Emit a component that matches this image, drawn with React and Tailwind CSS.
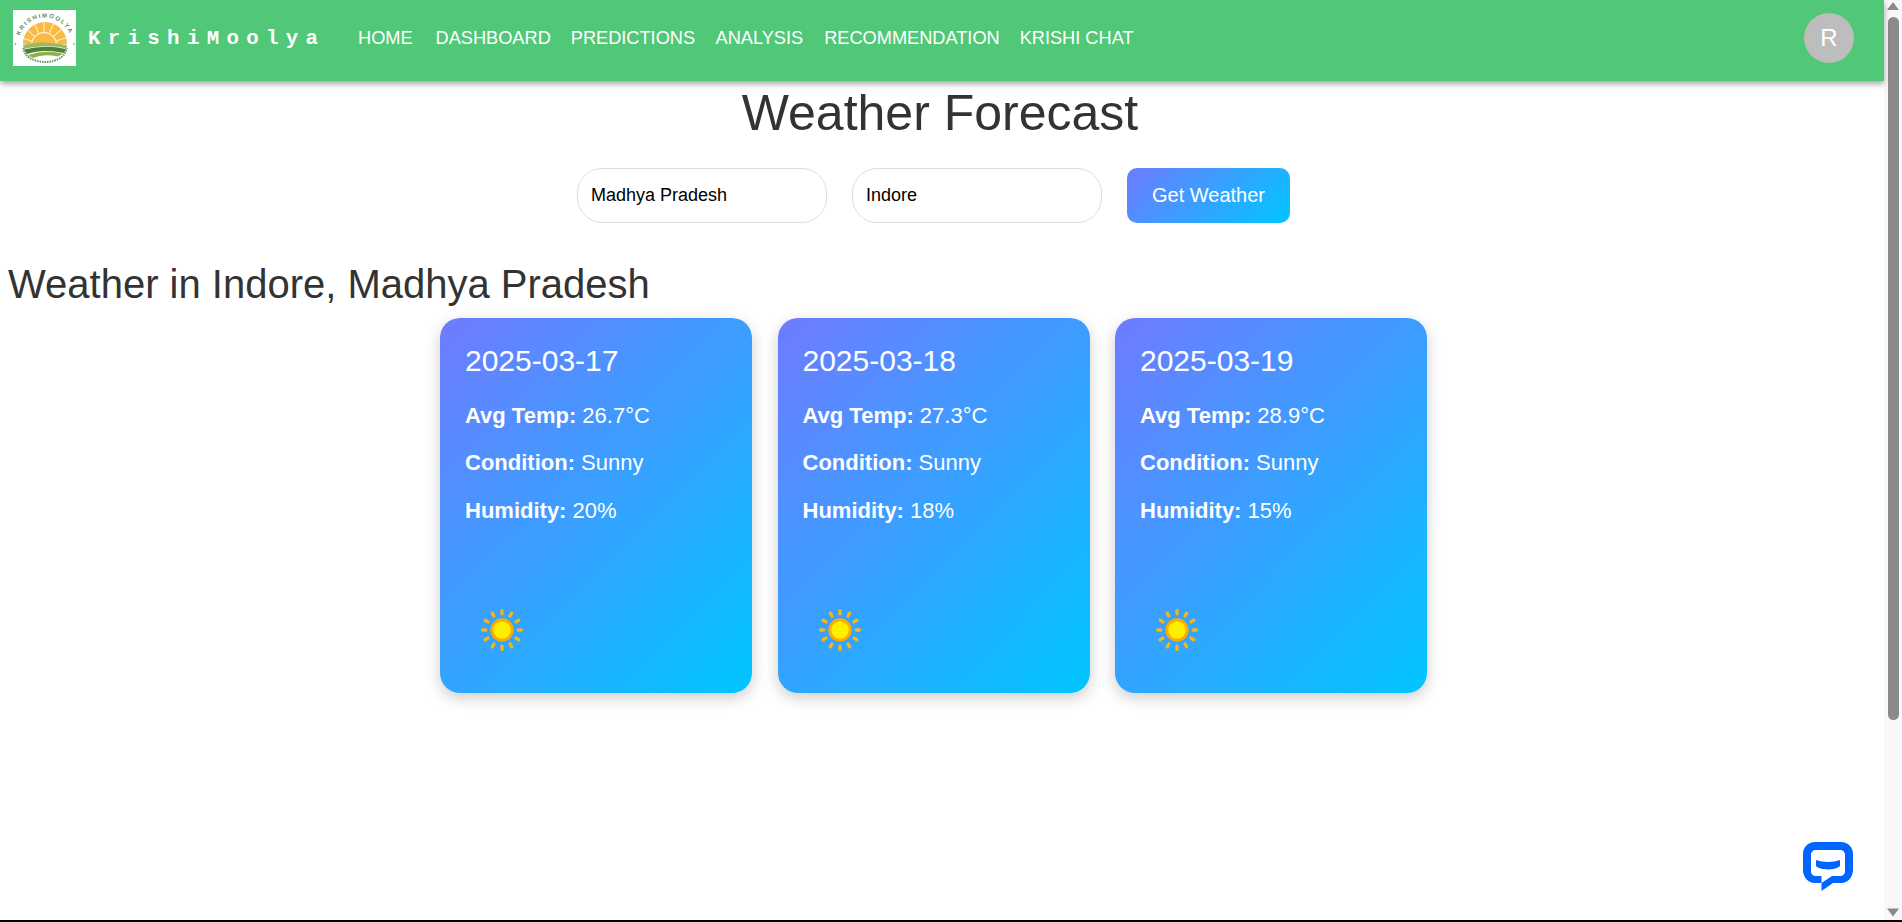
import React from "react";

const sans = "font-['Liberation_Sans',Arial,sans-serif]";

function Logo() {
  const rays = [-72, -48, -24, 0, 24, 48, 72];
  return (
    <svg viewBox="0 0 63 56" className="w-[63px] h-[56px] bg-white shrink-0">
      <defs>
        <path id="logoArc" d="M5.8 30 A26.5 26.5 0 0 1 58.2 30" fill="none" />
        <clipPath id="logoClip"><circle cx="32" cy="34" r="22" /></clipPath>
      </defs>
      <text fontSize="6" fontWeight="700" fill="#5f8a58" fontFamily="Liberation Sans" letterSpacing="1.6">
        <textPath href="#logoArc" startOffset="6%">KRISHIMOOLYA</textPath>
      </text>
      <circle cx="2.5" cy="34" r="0.8" fill="#5f8a58" />
      <circle cx="61" cy="34" r="0.8" fill="#5f8a58" />
      <g clipPath="url(#logoClip)">
        <rect x="9" y="10" width="46" height="25" fill="#fbb93f" />
        {rays.map((a) => (
          <line key={a} x1="31" y1="35" x2="31" y2="8" stroke="#fdf3d8" strokeWidth="1" transform={`rotate(${a} 31 35)`} />
        ))}
        <circle cx="31" cy="35" r="13" fill="#fdf3d8" />
        <circle cx="31" cy="35" r="11.8" fill="#fbb93f" />
        <rect x="9" y="34" width="46" height="22" fill="#ffffff" />
        <path d="M10 35 Q26 30 54 35 L54 38.5 Q32 34 10 39 Z" fill="#9dbb5c" />
        <path d="M11 39.5 Q32 34.5 53 39 L51 43 Q30 38.5 14 44 Z" fill="#4f7f3b" />
        <path d="M15 45 Q32 39.5 50 43.5 L45 46.5 Q30 43.5 20 48 Z" fill="#8db04a" />
      </g>
      <path d="M10.5 38 A21.5 14 0 0 0 53.5 38" fill="none" stroke="#6f9564" strokeWidth="2" strokeDasharray="1.6 0.9" />
    </svg>
  );
}

function Sun() {
  const rays = [0, 30, 60, 90, 120, 150, 180, 210, 240, 270, 300, 330];
  return (
    <svg viewBox="0 0 44 44" className="w-[44px] h-[44px] block">
      {rays.map((a) => (
        <line key={a} x1="22" y1="2.6" x2="22" y2="5.8" stroke="#ffb30f" strokeWidth="3.3" strokeLinecap="round" transform={`rotate(${a} 22 22)`} />
      ))}
      <circle cx="22" cy="22" r="11.7" fill="#ffa800" />
      <circle cx="22" cy="22" r="8.8" fill="#ffee00" />
    </svg>
  );
}

function Card({ date, temp, humidity }) {
  return (
    <div className="w-[312px] h-[375px] rounded-[20px] bg-[linear-gradient(135deg,#6f7bff,#00c6ff)] shadow-[0_5px_15px_rgba(0,0,0,0.2)] px-[25px] pt-[26px] text-white flex flex-col">
      <h3 className="text-[30px] leading-[34px] font-normal mb-[25px]">{date}</h3>
      <p className="text-[22px] leading-[25px] mb-[22.3px]"><strong className="font-bold">Avg Temp:</strong> {temp}°C</p>
      <p className="text-[22px] leading-[25px] mb-[22.3px]"><strong className="font-bold">Condition:</strong> Sunny</p>
      <p className="text-[22px] leading-[25px]"><strong className="font-bold">Humidity:</strong> {humidity}%</p>
      <div className="mt-[85px] ml-[15px]"><Sun /></div>
    </div>
  );
}

function Scrollbar() {
  return (
    <div className="w-[18px] shrink-0 bg-[#f8f8f8] flex flex-col items-center">
      <svg viewBox="0 0 12 8" className="w-[12px] h-[8px] mt-[2px] shrink-0"><path d="M6 0 L12 8 L0 8 Z" fill="#8a8a8a" /></svg>
      <div className="w-[11px] h-[703px] mt-[7px] rounded-t-[6px] rounded-b-[6px] bg-[#8a8a8a]" />
      <div className="flex-1" />
      <svg viewBox="0 0 12 8" className="w-[12px] h-[9px] mb-[3px] shrink-0"><path d="M0 0 L12 0 L6 8 Z" fill="#8a8a8a" /></svg>
    </div>
  );
}

function ChatIcon() {
  return (
    <svg viewBox="0 0 50 50" className="w-[50px] h-[50px]">
      <path fillRule="evenodd" fill="#0066ff" d="M12 0 H38 C45 0 50 5 50 12 V28 C50 35 45 41 38 41 H30 L18.5 49 V41 H12 C5 41 0 35 0 28 V12 C0 5 5 0 12 0 Z M13 8 C10 8 8 10 8 13 V29 C8 32 10 34 13 34 H18.5 V41 L29 34 H37 C40 34 42 32 42 29 V13 C42 10 40 8 37 8 Z" />
      <path fill="#0066ff" d="M13 18 C20 20.5 30 20.5 37 18 V24 C33 28.5 17 28.5 13 24 Z" />
    </svg>
  );
}

const links = [
  ["HOME", "mr-[23px]"],
  ["DASHBOARD", "mr-[20px]"],
  ["PREDICTIONS", "mr-[20.5px]"],
  ["ANALYSIS", "mr-[21px]"],
  ["RECOMMENDATION", "mr-[20px]"],
  ["KRISHI CHAT", ""],
];

export default function App() {
  return (
    <div className={`${sans} h-[922px] flex flex-col overflow-hidden bg-white`}>
      <div className="flex flex-1 min-h-0">
        <div className="flex-1 min-w-0 flex flex-col relative">
          <nav className="h-[81px] shrink-0 bg-[#50c878] shadow-[0_3px_6px_rgba(0,0,0,0.35)] flex items-center pl-[13px] pr-[30px] pb-[5px]">
            <Logo />
            <span className="ml-[12px] mt-[2px] w-[270px] text-white font-bold text-[20.8px] tracking-[7.3px] font-['Liberation_Mono',monospace]">KrishiMoolya</span>
            <ul className="flex items-center mt-[2px] text-white text-[18.2px]">
              {links.map(([l, m]) => (
                <li key={l} className={m}>{l}</li>
              ))}
            </ul>
            <div className="ml-auto w-[50px] h-[50px] rounded-full bg-[#bdbdbd] text-white text-[24px] flex items-center justify-center">R</div>
          </nav>
          <h1 className="text-center pr-[4px] text-[50px] leading-[59px] font-normal text-[#333] mt-[3px]">Weather Forecast</h1>
          <div className="flex justify-center pr-[17px] gap-[25px] mt-[25px]">
            <input readOnly value="Madhya Pradesh" className="w-[250px] h-[55px] rounded-[25px] border border-[#ddd] px-[13px] text-[18px] text-black outline-none" />
            <input readOnly value="Indore" className="w-[250px] h-[55px] rounded-[25px] border border-[#ddd] px-[13px] text-[18px] text-black outline-none" />
            <button className="w-[163px] h-[55px] pb-[1px] rounded-[10px] bg-[linear-gradient(135deg,#6f7bff,#00c6ff)] text-white text-[20px]">Get Weather</button>
          </div>
          <h2 className="ml-[8px] mt-[38px] text-[40px] leading-[46px] font-normal text-[#333]">Weather in Indore, Madhya Pradesh</h2>
          <div className="flex gap-[25.5px] ml-[440px] mt-[11px]">
            <Card date="2025-03-17" temp="26.7" humidity="20" />
            <Card date="2025-03-18" temp="27.3" humidity="18" />
            <Card date="2025-03-19" temp="28.9" humidity="15" />
          </div>
          <div className="absolute left-[1803px] top-[842px]"><ChatIcon /></div>
        </div>
        <Scrollbar />
      </div>
      <div className="h-[2px] bg-black shrink-0" />
    </div>
  );
}
